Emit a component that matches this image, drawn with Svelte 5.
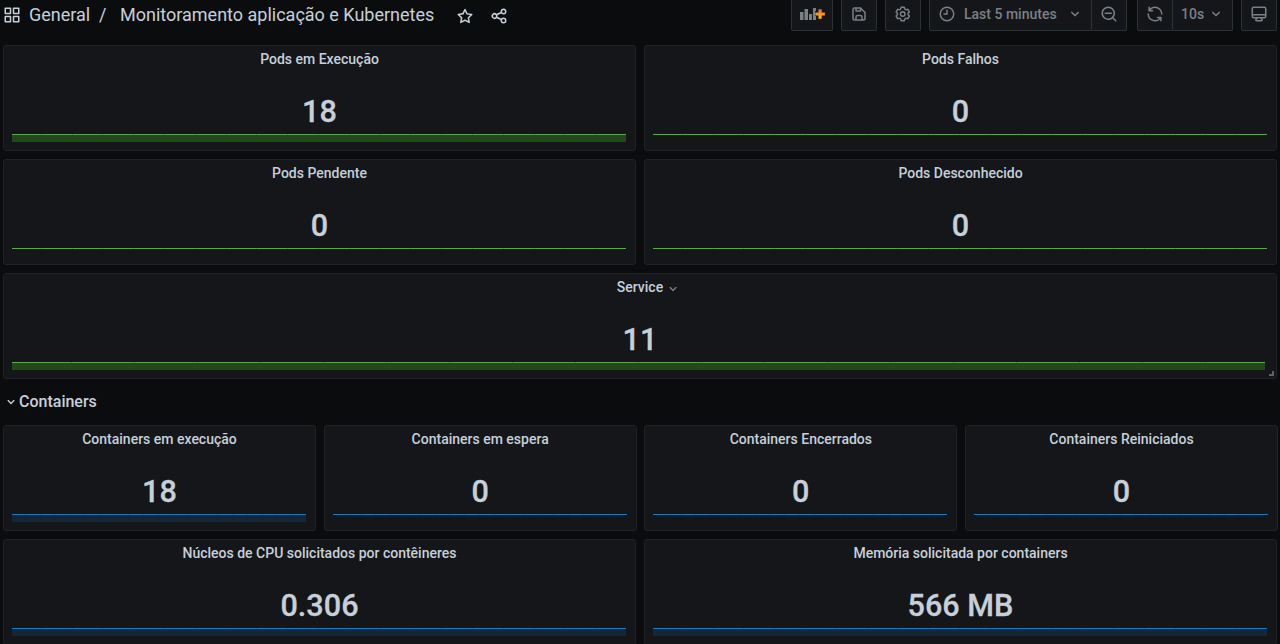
<script>
  const chevron = 'M17 9.17a1 1 0 0 0-1.41 0L12 12.71 8.46 9.17a1 1 0 0 0-1.41 1.42l4.24 4.24a1 1 0 0 0 1.42 0L17 10.59a1 1 0 0 0 0-1.42Z';
  const top = [
    { title: 'Pods em Execução', value: '18', fill: true, step: 30.8 },
    { title: 'Pods Falhos', value: '0', step: 30.8 },
    { title: 'Pods Pendente', value: '0', step: 30.8 },
    { title: 'Pods Desconhecido', value: '0', step: 30.8 },
    { title: 'Service', value: '11', fill: true, wide: true, step: 63 }
  ];
  const containers = [
    { title: 'Containers em execução', value: '18', fill: true, step: 14.8 },
    { title: 'Containers em espera', value: '0', step: 14.8 },
    { title: 'Containers Encerrados', value: '0', step: 14.8 },
    { title: 'Containers Reiniciados', value: '0', step: 14.8 }
  ];
  const resources = [
    { title: 'Núcleos de CPU solicitados por contêineres', value: '0.306', fill: true, step: 30.8 },
    { title: 'Memória solicitada por containers', value: '566 MB', fill: true, step: 30.8 }
  ];
</script>

{#snippet panel(p, tone)}
  <section class="panel {tone}" class:wide={p.wide}>
    <h2>
      <span>{p.title}</span>
      {#if p.wide}<svg class="caret" viewBox="0 0 24 24"><path d={chevron} /></svg>{/if}
    </h2>
    <div class="value">{p.value}</div>
    <div class="spark" class:filled={p.fill} style="--step:{p.step}px"></div>
    {#if p.wide}<i class="resize"></i>{/if}
  </section>
{/snippet}

<div class="page">
  <header>
    <svg class="apps" viewBox="0 0 24 24"><path d="M10,13H3a1,1,0,0,0-1,1v7a1,1,0,0,0,1,1h7a1,1,0,0,0,1-1V14A1,1,0,0,0,10,13ZM9,20H4V15H9ZM21,2H14a1,1,0,0,0-1,1v7a1,1,0,0,0,1,1h7a1,1,0,0,0,1-1V3A1,1,0,0,0,21,2ZM20,9H15V4h5Zm1,4H14a1,1,0,0,0-1,1v7a1,1,0,0,0,1,1h7a1,1,0,0,0,1-1V14A1,1,0,0,0,21,13Zm-1,7H15V15h5ZM10,2H3A1,1,0,0,0,2,3v7a1,1,0,0,0,1,1h7a1,1,0,0,0,1-1V3A1,1,0,0,0,10,2ZM9,9H4V4H9Z" /></svg>
    <span class="folder">General</span>
    <span class="slash">/</span>
    <span class="name">Monitoramento aplicação e Kubernetes</span>
    <svg class="star" viewBox="0 0 24 24"><path d="M22,9.67A1,1,0,0,0,21.14,9l-5.69-.83L12.9,3a1,1,0,0,0-1.8,0L8.55,8.16,2.86,9a1,1,0,0,0-.81.68,1,1,0,0,0,.25,1l4.13,4-1,5.68A1,1,0,0,0,6.9,21.44L12,18.77l5.1,2.67a.93.93,0,0,0,.46.12,1,1,0,0,0,.59-.19,1,1,0,0,0,.4-1l-1-5.68,4.13-4A1,1,0,0,0,22,9.67Zm-6.15,4a1,1,0,0,0-.29.88l.72,4.2-3.76-2a1.06,1.06,0,0,0-.94,0l-3.76,2,.72-4.2a1,1,0,0,0-.29-.88l-3-3,4.21-.61a1,1,0,0,0,.76-.55L12,5.7l1.88,3.82a1,1,0,0,0,.76.55l4.21.61Z" /></svg>
    <svg class="share" viewBox="0 0 24 24"><path d="M18,14a4,4,0,0,0-3.08,1.48l-5.1-2.35a3.64,3.64,0,0,0,0-2.26l5.1-2.35A4,4,0,1,0,14,6a4.17,4.17,0,0,0,.07.71L8.79,9.14a4,4,0,1,0,0,5.72l5.28,2.43A4.17,4.17,0,0,0,14,18a4,4,0,1,0,4-4ZM18,4a2,2,0,1,1-2,2A2,2,0,0,1,18,4ZM6,14a2,2,0,1,1,2-2A2,2,0,0,1,6,14Zm12,6a2,2,0,1,1,2-2A2,2,0,0,1,18,20Z" /></svg>

    <nav>
      <button class="add">
        <svg viewBox="0 0 25 14"><path fill="#7b8087" d="M0 5h3.500v8H0ZM4.500 2H8v11H4.500ZM9 7h3v6H9ZM13 1h3v3h-1v5h1v4h-3Z" /><defs><linearGradient id="plus" x1="0" y1="0" x2="0" y2="1"><stop stop-color="#f0672b" /><stop offset="1" stop-color="#fbc01d" /></linearGradient></defs><path fill="url(#plus)" d="M18.500 2.200h3.200v3.300h3.200v3h-3.200v3.200h-3.200V8.500h-3.200v-3h3.200Z" /></svg>
      </button>
      <button class="icon save"><svg viewBox="0 0 24 24"><path d="m20.710 9.290-6-6a1 1 0 0 0-.32-.21A1.090 1.090 0 0 0 14 3H6a3 3 0 0 0-3 3v12a3 3 0 0 0 3 3h12a3 3 0 0 0 3-3v-8a1 1 0 0 0-.29-.71ZM9 5h4v2H9Zm6 14H9v-3a1 1 0 0 1 1-1h4a1 1 0 0 1 1 1Zm4-1a1 1 0 0 1-1 1h-1v-3a3 3 0 0 0-3-3h-4a3 3 0 0 0-3 3v3H6a1 1 0 0 1-1-1V6a1 1 0 0 1 1-1h1v3a1 1 0 0 0 1 1h6a1 1 0 0 0 1-1V6.410l4 4Z" /></svg></button>
      <button class="icon gear"><svg viewBox="0 0 24 24"><path d="M19.900,12.660a1,1,0,0,1,0-1.320L21.180,9.900a1,1,0,0,0,.12-1.170l-2-3.460a1,1,0,0,0-1.070-.48l-1.880.38a1,1,0,0,1-1.150-.66l-.61-1.830A1,1,0,0,0,13.640,2h-4a1,1,0,0,0-1,.68L8.080,4.510a1,1,0,0,1-1.150.66L5,4.790A1,1,0,0,0,4,5.270L2,8.730A1,1,0,0,0,2.100,9.900l1.270,1.440a1,1,0,0,1,0,1.320L2.100,14.100A1,1,0,0,0,2,15.270l2,3.460a1,1,0,0,0,1.070.48l1.880-.38a1,1,0,0,1,1.150.66l.61,1.830a1,1,0,0,0,1,.68h4a1,1,0,0,0,.95-.68l.61-1.830a1,1,0,0,1,1.150-.66l1.880.38a1,1,0,0,0,1.070-.48l2-3.460a1,1,0,0,0-.12-1.170ZM18.410,14l.8.900-1.280,2.220-1.180-.24a3,3,0,0,0-3.450,2L12.920,20H10.360L10,18.860a3,3,0,0,0-3.450-2l-1.180.24L4.070,14.890l.8-.9a3,3,0,0,0,0-4l-.8-.9L5.350,6.890l1.180.24a3,3,0,0,0,3.450-2L10.360,4h2.560l.38,1.140a3,3,0,0,0,3.450,2l1.180-.24,1.280,2.220-.8.900A3,3,0,0,0,18.410,14ZM11.640,8a4,4,0,1,0,4,4A4,4,0,0,0,11.640,8Zm0,6a2,2,0,1,1,2-2A2,2,0,0,1,11.640,14Z" /></svg></button>
      <div class="group time">
        <button class="range"><svg viewBox="0 0 24 24"><path d="M12 2a10 10 0 1 0 10 10A10 10 0 0 0 12 2Zm0 18a8 8 0 1 1 8-8 8 8 0 0 1-8 8Zm0-14a1 1 0 0 0-1 1v4H8a1 1 0 0 0 0 2h4a1 1 0 0 0 1-1V7a1 1 0 0 0-1-1Z" /></svg><span>Last 5 minutes</span><svg class="down" viewBox="0 0 24 24"><path d={chevron} /></svg></button>
        <button class="zoom"><svg viewBox="0 0 24 24"><path d="M21.710,20.290,18,16.610A9,9,0,1,0,16.610,18l3.680,3.680a1,1,0,0,0,1.420,0A1,1,0,0,0,21.710,20.290ZM11,18a7,7,0,1,1,7-7A7,7,0,0,1,11,18Zm4-8H7a1,1,0,0,0,0,2h8a1,1,0,0,0,0-2Z" /></svg></button>
      </div>
      <div class="group refresh">
        <button class="sync"><svg viewBox="0 0 24 24"><path d="M19.910,15.510H15.380a1,1,0,0,0,0,2h2.400A8,8,0,0,1,4,12a1,1,0,0,0-2,0,10,10,0,0,0,16.880,7.230V21a1,1,0,0,0,2,0V16.500A1,1,0,0,0,19.910,15.510ZM12,2A10,10,0,0,0,5.120,4.770V3a1,1,0,0,0-2,0V7.500a1,1,0,0,0,1,1h4.500a1,1,0,0,0,0-2H6.220A8,8,0,0,1,20,12a1,1,0,0,0,2,0A10,10,0,0,0,12,2Z" /></svg></button>
        <button class="interval"><span>10s</span><svg class="down" viewBox="0 0 24 24"><path d={chevron} /></svg></button>
      </div>
      <button class="icon tv"><svg viewBox="0 0 24 24"><path d="M19,2H5A3,3,0,0,0,2,5V15a3,3,0,0,0,3,3H7.640l-.58,1a2,2,0,0,0,0,2,2,2,0,0,0,1.750,1h6.460A2,2,0,0,0,17,21a2,2,0,0,0,0-2l-.59-1H19a3,3,0,0,0,3-3V5A3,3,0,0,0,19,2ZM8.770,20,10,18H14l1.200,2ZM20,15a1,1,0,0,1-1,1H5a1,1,0,0,1-1-1V14H20Zm0-3H4V5A1,1,0,0,1,5,4H19a1,1,0,0,1,1,1Z" /></svg></button>
    </nav>
  </header>

  <main>
    <div class="grid two">{#each top as p}{@render panel(p, 'green')}{/each}</div>
    <div class="row"><svg viewBox="0 0 24 24"><path d={chevron} /></svg><span>Containers</span></div>
    <div class="grid four">{#each containers as p}{@render panel(p, 'blue')}{/each}</div>
    <div class="grid two">{#each resources as p}{@render panel(p, 'blue')}{/each}</div>
  </main>
</div>

<style>
  :global(body) { background: #0b0c0e; overflow: hidden; }
  .page { width: 1280px; height: 644px; overflow: hidden; background: #0b0c0e; color: #c7d0d9; font-family: Roboto, sans-serif; font-size: 14px; box-sizing: border-box; }
  .page * { box-sizing: border-box; }
  svg { fill: currentColor; flex: none; display: block; }
  header { height: 45px; padding-left: 3px; display: flex; align-items: flex-start; font-size: 18px; line-height: 30px; white-space: nowrap; }
  .apps { width: 18px; height: 18px; margin-top: 6px; }
  .folder { margin-left: 8px; width: 61px; }
  .slash { margin-left: 9px; width: 21px; }
  .name { width: 315px; }
  .star, .share { width: 18px; height: 18px; margin-top: 7px; }
  .star { margin-left: 21px; }
  .share { margin-left: 16px; }
  nav { display: flex; margin-left: auto; padding-right: 3px; height: 31px; color: #7b8087; }
  button { font: 500 14px/28px Roboto, sans-serif; color: inherit; background: #141619; border: 1px solid #2c3235; border-top: 0; border-radius: 0 0 2px 2px; height: 31px; padding: 0; display: flex; align-items: center; justify-content: center; }
  button svg { width: 18px; height: 18px; margin-top: -3px; }
  button span { margin-top: -2px; }
  .add { width: 42px; margin-right: 8px; }
  .add svg { width: 25px; height: 14px; margin-top: -2px; }
  .icon { width: 36px; }
  .save, .gear { margin-right: 8px; }
  .group { display: flex; }
  .time { margin-right: 10px; }
  .range { width: 163px; justify-content: flex-start; padding-left: 8px; }
  .range span { margin-left: 8px; width: 94px; text-align: left; }
  .down { margin-left: 8px; }
  .range .down, .interval .down { width: 18px; height: 18px; }
  .zoom { width: 36px; margin-left: -1px; }
  .sync { width: 36px; }
  .interval { width: 61px; margin-left: -1px; justify-content: flex-start; padding-left: 8px; }
  .interval .down { margin-left: 3px; }
  .refresh { margin-right: 8px; }

  main { padding: 0 2px 0 3px; display: flex; flex-direction: column; gap: 8px; }
  .grid { display: grid; gap: 8px; grid-auto-rows: 106px; }
  .two { grid-template-columns: 633px 633px; }
  .four { grid-template-columns: repeat(4, 313px); column-gap: 7.67px; }
  .panel { position: relative; background: #141619; border: 1px solid #202226; border-radius: 3px; display: flex; flex-direction: column; }
  .wide { grid-column: 1 / -1; }
  h2 { margin: 0; height: 28px; font: 500 14px/26px Roboto, sans-serif; display: flex; align-items: flex-start; justify-content: center; }
  .caret { width: 16px; height: 16px; margin: 7px -18px 0 2px; color: #7b8087; }
  .value { height: 60px; font-size: 30.6px; line-height: 75px; font-weight: 500; -webkit-text-stroke: .3px currentColor; text-align: center; }
  .spark { margin: 0 9px 0 8px; height: 8px; background: repeating-linear-gradient(90deg, transparent 0 calc(var(--step) - 1px), var(--gap) calc(var(--step) - 1px) var(--step)) var(--shift, -1px) 0 / calc(100% + 4px) 1px no-repeat, linear-gradient(var(--line), var(--line)) 0 0 / 100% 1px no-repeat; }
  .wide .spark { --shift: -3px; margin-right: 11px; }
  .filled { background-color: var(--fill); }
  .green { --line: #5ca849; --gap: #498a3c; --fill: #24471d; }
  .blue { --line: #1f78c1; --gap: #1b659f; --fill: #162636; }
  .resize { position: absolute; right: 2px; bottom: 2px; width: 5px; height: 5px; border-right: 2px solid #606165; border-bottom: 2px solid #606165; }
  .row { height: 30px; display: flex; align-items: center; padding-left: 0; font-size: 16px; line-height: 28px; font-weight: 500; }
  .row svg { width: 16px; height: 16px; margin-right: 0; }
  .row span { margin-top: -1px; }
</style>
